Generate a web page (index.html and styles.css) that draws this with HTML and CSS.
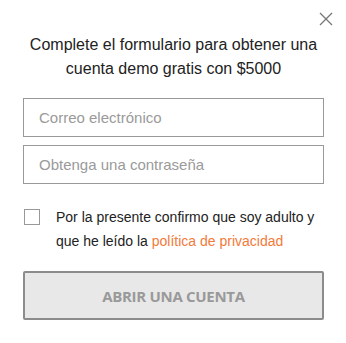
FILE: index.html
```html
<!DOCTYPE html>
<html lang="es">
<head>
    <meta charset="UTF-8">
    <meta name="viewport" content="width=device-width, initial-scale=1.0">
    <title>Cuenta demo</title>
    <link rel="stylesheet" href="styles.css">
</head>
<body>
    <div class="modal">
        <button class="close-btn" aria-label="Cerrar">
            <svg width="14" height="14" viewBox="0 0 14 14">
                <path d="M1 1 L13 13 M13 1 L1 13" stroke="#777" stroke-width="1.3" fill="none"/>
            </svg>
        </button>

        <h2 class="title">Complete el formulario para obtener una cuenta demo gratis con $5000</h2>

        <form class="demo-form">
            <input class="field" type="email" placeholder="Correo electrónico">
            <input class="field" type="password" placeholder="Obtenga una contraseña">

            <label class="consent">
                <span class="check-box"></span>
                <span class="consent-text">Por la presente confirmo que soy adulto y que he leído la <a href="#" class="policy-link">política de privacidad</a></span>
            </label>

            <button type="button" class="submit-btn">ABRIR UNA CUENTA</button>
        </form>
    </div>
</body>
</html>
```

FILE: styles.css
```css
* {
    margin: 0;
    padding: 0;
    box-sizing: border-box;
}

body {
    width: 346px;
    height: 343px;
    background: #fff;
    font-family: 'Liberation Sans', Arial, sans-serif;
    overflow: hidden;
}

.modal {
    position: relative;
    padding: 33px 22px 0 23px;
}

.close-btn {
    position: absolute;
    top: 12px;
    right: 13px;
    width: 14px;
    height: 14px;
    border: none;
    background: none;
    cursor: pointer;
    display: flex;
}

.title {
    font-size: 16px;
    font-weight: normal;
    line-height: 24px;
    color: #222;
    text-align: center;
}

.demo-form {
    display: flex;
    flex-direction: column;
    margin-top: 17px;
}

.field {
    height: 39px;
    width: 301px;
    border: 1px solid #999;
    padding: 0 15px;
    font-family: 'Liberation Sans', Arial, sans-serif;
    font-size: 15px;
    color: #333;
    outline: none;
    margin-bottom: 8px;
}

.field::placeholder {
    color: #9a9a9a;
}

.consent {
    display: flex;
    align-items: flex-start;
    gap: 16px;
    margin-top: 13px;
    padding-left: 1px;
}

.check-box {
    flex: none;
    width: 16px;
    height: 16px;
    border: 1px solid #999;
    margin-top: 4px;
}

.consent-text {
    font-size: 14px;
    line-height: 24px;
    color: #222;
}

.policy-link {
    color: #f27a3a;
    text-decoration: none;
}

.submit-btn {
    margin-top: 18px;
    width: 301px;
    height: 49px;
    background: #e8e8e8;
    border: 2px solid #8c8c8c;
    border-radius: 2px;
    font-family: 'Open Sans', sans-serif;
    font-weight: 700;
    font-size: 15px;
    color: #999;
    letter-spacing: -0.3px;
}
```
